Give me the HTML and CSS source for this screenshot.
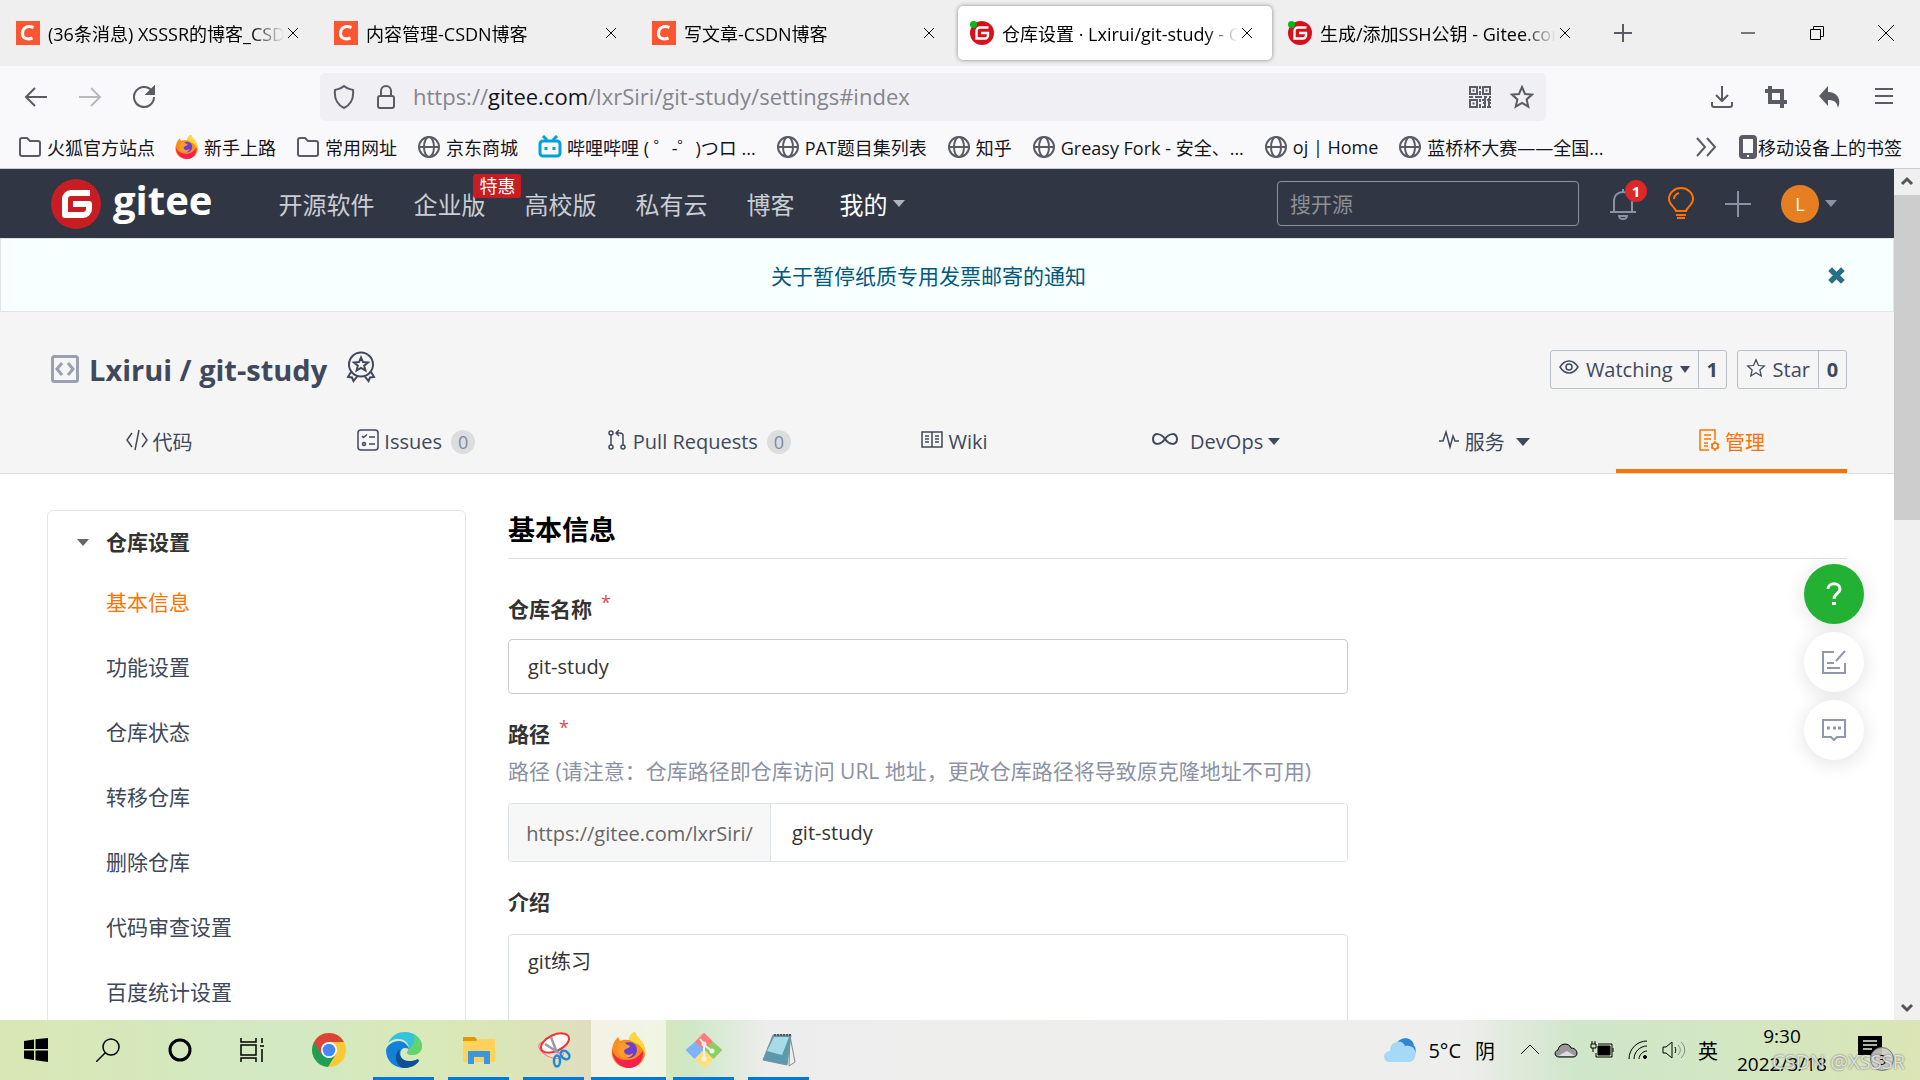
FILE: index.html
```html
<!DOCTYPE html>
<html lang="zh-CN">
<head>
<meta charset="utf-8">
<title>仓库设置 · Lxirui/git-study - Gitee.com</title>
<link rel="stylesheet" href="styles.css">
</head>
<body>
<svg class="defs" aria-hidden="true">
  <symbol id="x" viewBox="0 0 14 14"><path d="M2 2l10 10M12 2L2 12"/></symbol>
  <symbol id="folder" viewBox="0 0 24 24"><path d="M2 19V5a2 2 0 0 1 2-2h5l3 3h8a2 2 0 0 1 2 2v11a2 2 0 0 1-2 2H4a2 2 0 0 1-2-2z"/></symbol>
  <symbol id="globe" viewBox="0 0 24 24"><circle cx="12" cy="12" r="10"/><ellipse cx="12" cy="12" rx="5" ry="10"/><path d="M2 12h20"/></symbol>
  <symbol id="star" viewBox="0 0 24 24"><path d="M12 2l3 7 7 .6-5.400 4.800 1.700 7.200L12 17.800 5.700 21.600l1.700-7.200L2 9.600 9 9z"/></symbol>
  <symbol id="csdn" viewBox="0 0 24 24"><path fill="#fc5531" d="M0 0h24v24H0z"/><path d="M17.500 6.500C11 4 6.500 7 6.500 12.500c0 5 5 6.500 10 4.500" fill="none" stroke="#fff" stroke-width="3"/></symbol>
  <symbol id="gitee" viewBox="0 0 24 24"><circle cx="12" cy="12" r="12" fill="#d8101c"/><path d="M18.500 6.500H10a3.500 3.500 0 0 0-3.500 3.500v7.500h8.500a3 3 0 0 0 3-3v-2.500h-7" fill="none" stroke="#fff" stroke-width="2.400"/></symbol>
  <symbol id="firefox" viewBox="0 0 36 36">
    <path fill="#ff8b1a" d="M2 13C4 8 6 6 7 5l2 4c4-2 8-1 9-1 0-4 3-7 6-8 1 4 4 6 7 10 4 6 4 13 1 18-5 9-19 11-27 3C0 26 0 19 2 13z"/>
    <path fill="#f5204f" d="M1 17c1 6 6 11 14 11 9 0 12-3 17-9 1 9-5 17-14 17S1 28 1 17z"/>
    <path fill="#ffd83a" d="M18 8c0-4 3-7 6-8 1 4 4 6 7 10 3 5 4 9 3 12-2-6-6-10-16-14z"/>
    <circle cx="18" cy="18" r="8" fill="#6b3fd1"/>
    <path fill="#ff9a2b" d="M7 12c4-3 8-1 8 0l4 2c-1 3-5 2-6 5 0 4 6 5 9 2 0 5-12 8-15 0-1-4-1-7 0-9z"/>
  </symbol>
</svg>

<header class="browser">
  <div class="tabs">
    <div class="tab"><svg class="fav"><use href="#csdn"/></svg><span class="tab-title">(36条消息) XSSSR的博客_CSDN博客</span><button class="tab-close" aria-label="关闭"><svg><use href="#x"/></svg></button></div>
    <div class="tab"><svg class="fav"><use href="#csdn"/></svg><span class="tab-title">内容管理-CSDN博客</span><button class="tab-close" aria-label="关闭"><svg><use href="#x"/></svg></button></div>
    <div class="tab"><svg class="fav"><use href="#csdn"/></svg><span class="tab-title">写文章-CSDN博客</span><button class="tab-close" aria-label="关闭"><svg><use href="#x"/></svg></button></div>
    <div class="tab active"><span class="fav-wrap"><svg class="fav"><use href="#gitee"/></svg></span><span class="tab-title">仓库设置 · Lxirui/git-study - Gitee.com</span><button class="tab-close" aria-label="关闭"><svg><use href="#x"/></svg></button></div>
    <div class="tab"><span class="fav-wrap"><svg class="fav"><use href="#gitee"/></svg></span><span class="tab-title">生成/添加SSH公钥 - Gitee.com</span><button class="tab-close" aria-label="关闭"><svg><use href="#x"/></svg></button></div>
    <button class="new-tab" aria-label="新标签页"><svg viewBox="0 0 18 18"><path d="M9 0v18M0 9h18"/></svg></button>
    <div class="window-buttons">
      <button aria-label="最小化"><svg viewBox="0 0 16 16"><path d="M1 8h14"/></svg></button>
      <button aria-label="还原"><svg viewBox="0 0 16 16"><path d="M1.500 4.500h10v10h-10zM4.500 4V1.500h10v10H12"/></svg></button>
      <button aria-label="关闭窗口"><svg viewBox="0 0 16 16"><path d="M0 0l16 16M16 0L0 16"/></svg></button>
    </div>
  </div>

  <div class="toolbar">
    <div class="nav-buttons">
      <button aria-label="后退"><svg viewBox="0 0 24 24"><path d="M23 12H2M11 3l-9 9 9 9"/></svg></button>
      <button class="off" aria-label="前进"><svg viewBox="0 0 24 24"><path d="M1 12h21M13 3l9 9-9 9"/></svg></button>
      <button aria-label="刷新"><svg viewBox="0 0 24 24"><path d="M20 6a10 10 0 1 0 2 6"/><path fill="currentColor" d="M22 2v7h-7z"/></svg></button>
    </div>
    <div class="url-bar">
      <svg viewBox="0 0 24 24"><path d="M12 1c3 3 6 3 9 4 1 9-3 15-9 18C6 20 2 14 3 5c3-1 6-1 9-4z"/></svg>
      <svg viewBox="0 0 24 24"><rect x="4" y="11" width="16" height="12" rx="2"/><path d="M7 11V6a5 5 0 0 1 10 0v5"/></svg>
      <span class="url">https://<b>gitee.com</b>/lxrSiri/git-study/settings#index</span>
      <svg viewBox="0 0 24 24"><path d="M2 2h7v7H2zM15 2h7v7h-7zM2 15h7v7H2zM4.500 5.500h2M17.500 5.500h2M4.500 18.500h2M12 1v3M12 6v4M1 12h4M7 12h7M16 12h3M21 12h2M12 14v3M14 15h3M19 15h4M15 18h3M20 18h3M12 19v4M14 22h3M19 22h4M17 13v10M21 13v8"/></svg>
      <svg viewBox="0 0 24 24"><use href="#star"/></svg>
    </div>
    <div class="tool-buttons">
      <button aria-label="下载"><svg viewBox="0 0 24 24"><path d="M12 1v15M6 10l6 6 6-6M2 17v3a2 2 0 0 0 2 2h16a2 2 0 0 0 2-2v-3"/></svg></button>
      <button aria-label="截图"><svg viewBox="0 0 24 24"><path stroke-width="4" d="M6 1v16h17M1 6h17v17"/></svg></button>
      <button aria-label="撤销"><svg viewBox="0 0 24 24"><path fill="currentColor" stroke="none" d="M10 1v6c9 0 14 7 10 16-1-6-4-8-10-8v6L1 11z"/></svg></button>
      <button aria-label="菜单"><svg viewBox="0 0 24 24"><path d="M3 4h18M3 11h18M3 18h18"/></svg></button>
    </div>
  </div>

  <nav class="bookmarks">
    <a href="#"><svg><use href="#folder"/></svg>火狐官方站点</a>
    <a href="#"><svg class="solid"><use href="#firefox"/></svg>新手上路</a>
    <a href="#"><svg><use href="#folder"/></svg>常用网址</a>
    <a href="#"><svg><use href="#globe"/></svg>京东商城</a>
    <a href="#"><svg class="bili" viewBox="0 0 24 24"><rect x="2" y="6" width="20" height="15" rx="3"/><path d="M5 1l4 4M19 1l-4 4M8 12v3M16 12v3"/></svg>哔哩哔哩 ( ゜-゜)つロ ...</a>
    <a href="#"><svg><use href="#globe"/></svg>PAT题目集列表</a>
    <a href="#"><svg><use href="#globe"/></svg>知乎</a>
    <a href="#"><svg><use href="#globe"/></svg>Greasy Fork - 安全、...</a>
    <a href="#"><svg><use href="#globe"/></svg>oj | Home</a>
    <a href="#"><svg><use href="#globe"/></svg>蓝桥杯大赛——全国...</a>
    <span class="bookmarks-end">
      <button aria-label="更多书签"><svg viewBox="0 0 24 24"><path d="M3 3l8 9-8 9M13 3l8 9-8 9"/></svg></button>
      <a href="#"><svg class="phone" viewBox="0 0 20 24"><rect x="2" y="1" width="16" height="22" rx="3" fill="#5b5b66"/><path fill="#f9f9fb" stroke="none" d="M5 4h10v14H5z"/><path stroke="#f9f9fb" d="M9 21h2"/></svg>移动设备上的书签</a>
    </span>
  </nav>
</header>

<div class="viewport">
  <div class="page">
    <nav class="site-nav">
      <a class="logo" href="#"><svg viewBox="0 0 50 50"><circle cx="25" cy="25" r="25" fill="#c71d23"/><path d="M39 14H20a6 6 0 0 0-6 6v16h18a6 6 0 0 0 6-6v-5H22" fill="none" stroke="#fff" stroke-width="6" stroke-linejoin="round"/></svg><span>gitee</span></a>
      <a href="#">开源软件</a>
      <a class="enterprise" href="#">企业版<span class="promo">特惠</span></a>
      <a href="#">高校版</a>
      <a href="#">私有云</a>
      <a href="#">博客</a>
      <a class="mine" href="#">我的<i class="caret"></i></a>
      <div class="site-tools">
        <input type="text" class="search" placeholder="搜开源" aria-label="搜开源">
        <a class="bell" href="#" aria-label="通知"><svg viewBox="0 0 28 34"><path d="M5 24V13a9 8 0 0 1 18 0v11M1 25h26M14 5V2M10 29h8a4 3 0 0 1-8 0z"/></svg><span class="count">1</span></a>
        <a class="bulb" href="#" aria-label="动态"><svg viewBox="0 0 28 34"><path d="M9 24C8 20 2 18 2 12a12 11 0 0 1 24 0c0 6-6 8-7 12zM9 28h10M10 31h8M7 12c0-3 2-5 5-6"/></svg></a>
        <a class="plus" href="#" aria-label="新建"><svg viewBox="0 0 26 26"><path d="M13 0v26M0 13h26"/></svg></a>
        <a class="user" href="#"><span class="avatar">L</span><i class="caret"></i></a>
      </div>
    </nav>

    <div class="notice">
      <a href="#">关于暂停纸质专用发票邮寄的通知</a>
      <button aria-label="关闭通知"><svg viewBox="0 0 16 16"><path d="M2 2l12 12M14 2L2 14"/></svg></button>
    </div>

    <header class="repo">
      <div class="repo-head">
        <svg class="repo-icon" viewBox="0 0 28 28"><rect x="1.500" y="1.500" width="25" height="25" rx="2"/><path d="M11 8l-5 6 5 6M17 8l5 6-5 6"/></svg>
        <h1><a href="#">Lxirui</a> / <a href="#">git-study</a></h1>
        <svg class="medal" viewBox="0 0 28 30"><circle cx="14" cy="12.500" r="12"/><path d="M14 5.500l2 4.600 5 .4-3.800 3.200 1.200 4.800-4.400-2.600-4.400 2.600 1.200-4.800L7 10.500l5-.4zM4 20l-3 5 4 .5L6.500 29l4-5M24 20l3 5-4 .5-1.500 3.500-4-5"/></svg>
        <div class="counters">
          <div class="pair"><button><svg viewBox="0 0 20 20"><path d="M1 9c5-8 13-8 18 0-5 8-13 8-18 0z"/><circle cx="10" cy="9" r="3"/></svg>Watching<i class="caret"></i></button><a href="#">1</a></div>
          <div class="pair"><button><svg><use href="#star"/></svg>Star</button><a href="#">0</a></div>
        </div>
      </div>
      <nav class="repo-tabs">
        <a href="#"><svg viewBox="0 0 22 22"><path d="M6 4l-5 7 5 7M16 4l5 7-5 7M13 1L9 21"/></svg>代码</a>
        <a href="#"><svg viewBox="0 0 22 22"><rect x="1" y="1" width="20" height="20" rx="3"/><path d="M5 7l1.500 1.500L10 5.500M12 8h6M12 15h6"/><circle cx="7" cy="15" r="1.500"/></svg>Issues<span class="num">0</span></a>
        <a href="#"><svg viewBox="0 0 22 22"><circle cx="5" cy="4" r="2"/><circle cx="5" cy="18" r="2"/><circle cx="17" cy="18" r="2"/><path d="M5 6v10M17 16V7a3 3 0 0 0-3-3h-4M13 1l-3 3 3 3"/></svg>Pull Requests<span class="num">0</span></a>
        <a href="#"><svg viewBox="0 0 22 22"><path d="M1 3h20v15H1zM11 3v15M4 7h4M4 10h4M4 13h4M14 7h4M14 10h4M14 13h4"/></svg>Wiki</a>
        <a href="#"><svg class="wide" viewBox="0 0 28 22"><path stroke-width="2" d="M14 10C10 4 2 3 2 10s8 6 12 0 12-7 12 0-8 6-12 0z"/></svg>DevOps<i class="caret"></i></a>
        <a href="#"><svg viewBox="0 0 22 22"><path d="M1 12h4l3-9 4 15 3-11 2 5h4"/></svg>服务<i class="caret gap"></i></a>
        <a href="#" class="current"><svg viewBox="0 0 22 22"><path d="M11 21H2V1h15v10M6 6h7M6 10h7M6 14h4M6 17h4"/><circle cx="17" cy="17" r="3"/><path d="M17 12v2M17 20v2M13 15l2 1M19 18l2 1M13 19l2-1M19 16l2-1"/></svg>管理</a>
      </nav>
    </header>

    <div class="content">
      <aside class="side">
        <h2><i class="caret"></i>仓库设置</h2>
        <a class="current" href="#">基本信息</a>
        <a href="#">功能设置</a>
        <a href="#">仓库状态</a>
        <a href="#">转移仓库</a>
        <a href="#">删除仓库</a>
        <a href="#">代码审查设置</a>
        <a href="#">百度统计设置</a>
      </aside>
      <main>
        <h2>基本信息</h2>
        <form>
          <label for="name">仓库名称<sup>*</sup></label>
          <input id="name" type="text" value="git-study">
          <label for="path">路径<sup>*</sup></label>
          <p>路径 (请注意：仓库路径即仓库访问 URL 地址，更改仓库路径将导致原克隆地址不可用)</p>
          <div class="prefixed"><span>https://gitee.com/lxrSiri/</span><input id="path" type="text" value="git-study"></div>
          <label for="intro">介绍</label>
          <textarea id="intro">git练习</textarea>
        </form>
      </main>
    </div>
  </div>

  <div class="floaters">
    <button class="help" aria-label="帮助"><svg viewBox="0 0 16 24"><path d="M2 7c0-7 12-7 12 0 0 4-6 5-6 10"/><path d="M8 20v3" stroke-width="4"/></svg></button>
    <button aria-label="反馈"><svg viewBox="0 0 26 26"><path d="M13 3H2v21h22V14M24 2L15 12M6 14h7M6 19h13"/></svg></button>
    <button aria-label="留言"><svg viewBox="0 0 26 26"><path d="M2 3h22v17h-8l-3 3-3-3H2z"/><path stroke-width="3" d="M6 11h3M12 11h3M17 11h3"/></svg></button>
  </div>

  <div class="scrollbar">
    <svg viewBox="0 0 26 26"><path d="M8 15l5-5 5 5"/></svg>
    <div class="thumb"></div>
    <svg viewBox="0 0 26 26"><path d="M8 11l5 5 5-5"/></svg>
  </div>
</div>

<footer class="taskbar">
  <div class="system">
    <button aria-label="开始"><svg viewBox="0 0 24 24"><path fill="#000" d="M0 3l10-1.500V11H0zM11.500 1.300L24 0v11H11.500zM0 12.500h10V22L0 20.500zM11.500 12.500H24V24l-12.500-1.700z"/></svg></button>
    <button aria-label="搜索"><svg viewBox="0 0 24 24" fill="none" stroke="#000" stroke-width="1.500"><circle cx="15" cy="9" r="8"/><path d="M9.500 14.500L0 24"/></svg></button>
    <button aria-label="Cortana"><svg viewBox="0 0 24 24"><circle cx="12" cy="12" r="10" fill="none" stroke="#000" stroke-width="3"/></svg></button>
    <button aria-label="任务视图"><svg viewBox="0 0 24 24" fill="none" stroke="#000" stroke-width="1.500"><path d="M1 0v4h15V0M1 24v-4h15v4M1 7h15v10H1zM22 0v5M22 11v13M20 8h4"/></svg></button>
  </div>
  <div class="apps">
    <button aria-label="Chrome"><svg viewBox="0 0 36 36"><circle cx="18" cy="18" r="17" fill="#fbc934"/><path fill="#1e9f57" d="M3 10a17 17 0 0 0 14 25l8-13-7-4z"/><path fill="#dc4437" d="M3 10l7 12 8-12h15A17 17 0 0 0 3 10z"/><circle cx="18" cy="18" r="8" fill="#fff"/><circle cx="18" cy="18" r="6.300" fill="#4587f3"/></svg></button>
    <button class="open" aria-label="Edge"><svg viewBox="0 0 36 36"><path fill="#35c2e0" d="M2 11C6 3 12 0 19 0c10 0 17 7 17 14 0 6-5 9-10 9-4 0-6-2-4-4 2-4 0-13-12-12-4 1-6 2-8 4z"/><path fill="#63d46b" d="M28 3c5 3 8 7 8 11 0 6-5 9-10 9-4 0-6-2-4-4 3-6 8-6 6-16z"/><path fill="#1481d8" d="M0 18C1 13 7 9 13 9c5 0 9 4 10 8-9-4-11 6-6 11 4 5 12 5 17 0-4 6-10 8-15 8C8 36 0 29 0 18z"/><path fill="#104f95" d="M14 17c-3 8 5 16 18 10l1 2c-4 5-10 7-15 7-7-1-12-12-4-19z"/></svg></button>
    <button class="open" aria-label="资源管理器"><svg viewBox="0 0 36 36"><path fill="#e09b00" d="M2 5h12l3 4v5H2z"/><path fill="#ffd25c" d="M2 9h13l3-2h16v23H2z"/><path fill="#3a96dd" d="M7 19h22v13h-6v-7H13v7H7z"/></svg></button>
    <button class="open" aria-label="截图工具"><svg viewBox="0 0 36 36"><ellipse cx="15" cy="18" rx="13" ry="7" fill="#f7e0dc" stroke="#e77" transform="rotate(25 15 18)"/><ellipse cx="19" cy="11" rx="15" ry="8" fill="#fff" stroke="#e33" stroke-width="2" transform="rotate(-25 19 11)"/><path stroke="#99a" stroke-width="2.500" d="M15 5l6 16M9 12l14 9"/><g fill="none" stroke="#1c8ad6" stroke-width="2.500"><ellipse cx="21" cy="29" rx="3" ry="5.500"/><ellipse cx="29" cy="23" rx="3.500" ry="5" transform="rotate(-50 29 23)"/></g></svg></button>
    <button class="open front" aria-label="Firefox"><svg><use href="#firefox"/></svg></button>
    <button class="open" aria-label="Git"><svg viewBox="0 0 36 36"><g stroke-linejoin="round" stroke-width="2"><path fill="#ff7b7b" stroke="#ff7b7b" d="M18 2l8 8-8 7-8-7z"/><path fill="#80b3ff" stroke="#80b3ff" d="M9 11l8 7-8 8-8-8z"/><path fill="#8dcf62" stroke="#8dcf62" d="M27 11l8 7-8 8-8-8z"/><path fill="#ffe07a" stroke="#ffe07a" d="M18 19l8 8-8 8-8-8z"/></g><path d="M14 7l4 5v16M18 13l8 6" stroke="#f0f3ea" stroke-width="2" fill="none"/><g fill="#f0f3ea"><circle cx="18" cy="12" r="2.500"/><circle cx="26" cy="19" r="2.500"/><circle cx="18" cy="27" r="2.500"/></g></svg></button>
    <button class="open" aria-label="记事本"><svg viewBox="0 0 36 36"><path fill="#eee" stroke="#888" d="M29 4l5 26-6 4z"/><path fill="#5b9aac" stroke="#78929a" d="M12 3h18l-4 30-24-5z"/><path fill="#a8dbe8" d="M13 5h15l-7 18-15-4z"/><path stroke="#555" stroke-width="2" stroke-dasharray="2 1" d="M13 3h18"/></svg></button>
  </div>
  <div class="tray">
    <svg class="weather" viewBox="0 0 32 26"><path fill="#2f86d5" d="M12 8c3-9 17-9 18 1 2 1 2 5 1 8z"/><path fill="#a4d9f8" d="M7 25c-9 0-9-10-1-11C6 4 18 1 21 9c9-2 12 6 10 11-1 4-4 5-7 5z"/></svg>
    <span>5°C</span><span class="sky">阴</span>
    <svg class="chev" viewBox="0 0 20 20"><path d="M1 14l9-9 9 9"/></svg>
    <svg class="tray-icon" viewBox="0 0 24 20"><path fill="#999" d="M5 17c-5 0-5-6-1-7 1-7 11-8 13-2 7 0 8 9 2 9z"/><path fill="#ddd" stroke="none" d="M4 16l9-5 8 5z"/></svg>
    <svg class="tray-icon" viewBox="0 0 24 20"><path d="M8 4h14v13H6v-4M2 1v3M5 1v3M1 4h5v4H1zM3 8v4M23 8v4"/><path fill="#000" d="M8 6h12v9H8z"/></svg>
    <svg class="tray-icon" viewBox="0 0 20 20"><path d="M1 19C1 9 9 1 19 1M6 19C6 12 12 6 19 6M11 19c0-4 4-8 8-8"/><circle cx="17" cy="17" r="1.500" fill="#000"/></svg>
    <svg class="tray-icon" viewBox="0 0 24 20"><path d="M1 7h3l6-5v16l-6-5H1z"/><path d="M13 7c1 2 1 4 0 6"/><path stroke="#888" d="M16 5c3 3 3 7 0 10M19 2c5 5 5 11 0 16"/></svg>
    <span class="ime">英</span>
    <div class="clock"><time>9:30</time><time>2022/3/18</time></div>
    <div class="messages"><svg viewBox="0 0 24 24"><path d="M0 0h24v19h-6v5l-6-5H0z"/><path stroke="#e6efce" stroke-width="1.500" d="M5 5h14M5 9h14M5 13h9"/></svg><span class="badge">3</span></div>
    <span class="watermark">CSDN @XSSSR</span>
  </div>
</footer>
</body>
</html>
```
FILE: styles.css
```css
* { box-sizing: border-box; }
body {
  margin: 0;
  height: 100vh;
  display: flex;
  flex-direction: column;
  overflow: hidden;
  font-family: "Open Sans", "Noto Sans CJK SC", sans-serif;
  color: #000;
}
button { border: 0; padding: 0; background: none; font: inherit; color: inherit; display: flex; align-items: center; justify-content: center; }
a { color: inherit; text-decoration: none; }
h1, h2, p { margin: 0; }
input, textarea { font: inherit; color: inherit; outline: 0; min-width: 0; }
svg { flex: none; fill: none; stroke: currentColor; }
.defs { position: absolute; width: 0; height: 0; }
.caret { flex: none; border: 6px solid transparent; border-top: 7px solid currentColor; border-bottom: 0; }

/* browser */
.browser { flex: none; background: #f9f9fb; border-bottom: 1px solid #ccccd0; font-size: 18px; }
.tabs { height: 66px; background: #efefef; display: flex; align-items: center; padding-left: 4px; }
.tab { flex: 0 1 314px; margin-right: 4px; height: 54px; padding: 0 18px 0 12px; display: flex; align-items: center; border-radius: 5px; min-width: 0; }
.tab.active { background: #fff; box-shadow: 0 0 4px #888; }
.fav { width: 24px; height: 24px; stroke: none; display: block; }
.fav-wrap { position: relative; }
.fav-wrap::after { content: ""; position: absolute; left: 0; top: 0; width: 7px; height: 7px; border-radius: 50%; background: #0b1; }
.tab-title { flex: 1; margin-left: 8px; overflow: hidden; white-space: nowrap; -webkit-mask-image: linear-gradient(to right, #000 86%, transparent); mask-image: linear-gradient(to right, #000 86%, transparent); }
.tab-close { margin-left: 2px; }
.tab-close svg { width: 14px; height: 14px; }
.new-tab { margin-left: 20px; color: #5b5b66; }
.new-tab svg { width: 18px; height: 18px; stroke-width: 2; }
.window-buttons { margin-left: auto; display: flex; }
.window-buttons button { width: 69px; height: 54px; }
.window-buttons svg { width: 16px; height: 16px; }

.toolbar { height: 61px; display: flex; align-items: center; color: #5b5b66; padding: 0 9px; }
.toolbar svg { width: 24px; height: 24px; stroke-width: 2; }
.nav-buttons { flex: 0 0 311px; display: flex; }
.nav-buttons button { width: 54px; }
.nav-buttons .off { color: #b9b9bf; }
.url-bar { flex: 0 1 1226px; height: 48px; background: #f0f0f4; border-radius: 5px; display: flex; align-items: center; padding: 0 12px; gap: 18px; min-width: 0; }
.url { flex: 1; font-size: 22px; line-height: 46px; height: 48px; color: #85858d; margin-left: -3px; white-space: nowrap; overflow: hidden; }
.url b { font-weight: 400; color: #15141a; }
.tool-buttons { margin-left: auto; display: flex; }
.tool-buttons button { width: 54px; }

.bookmarks { height: 41px; display: flex; align-items: center; gap: 20px; padding: 0 18px 2px; white-space: nowrap; color: #15141a; }
.bookmarks a { display: flex; align-items: center; gap: 5px; }
.bookmarks svg { width: 24px; height: 24px; color: #5b5b66; stroke-width: 2; }
.bookmarks .solid { stroke: none; }
.bookmarks .bili { color: #00a1d6; stroke-width: 3; }
.bookmarks-end { margin-left: auto; display: flex; gap: 20px; }
.bookmarks-end a { gap: 0; }
.bookmarks .phone { width: 20px; }

/* page */
.viewport { flex: 1; min-height: 0; position: relative; display: flex; background: #fff; }
.page { flex: 1; min-width: 0; overflow: hidden; font-size: 21px; color: #40485b; }
.site-nav { height: 69px; background: #303643; color: #c9cdd4; display: flex; align-items: center; padding: 0 57px 0 51px; font-size: 24px; gap: 39px; white-space: nowrap; }
.logo { display: flex; align-items: center; gap: 12px; color: #fff; font-weight: 700; font-size: 40px; line-height: 50px; margin-right: 27px; }
.logo svg { width: 50px; height: 50px; stroke: none; }
.logo span { padding-bottom: 8px; }
.enterprise { position: relative; }
.promo { position: absolute; right: -36px; top: -12px; background: #c71d23; color: #fff; font-size: 18px; line-height: 24px; padding: 0 6px; border-radius: 3px; }
.mine { color: #fff; display: flex; align-items: center; gap: 6px; margin-left: 6px; }
.mine .caret { color: #b0b3ba; }
.site-tools { margin-left: auto; display: flex; align-items: center; gap: 30px; color: #8c92a4; }
.search { width: 302px; height: 45px; border: 1px solid #8c92a4; border-radius: 4px; background: none; padding: 0 12px; font-size: 21px; }
.search::placeholder { color: #8c8f96; }
.site-tools svg { display: block; width: 28px; height: 34px; stroke-width: 2; }
.bell { position: relative; }
.count { position: absolute; left: 16px; top: -7px; width: 22px; height: 22px; border-radius: 50%; background: #db2828; color: #fff; font-size: 15px; line-height: 22px; font-weight: 700; text-align: center; }
.bulb { color: #fe7300; }
.site-tools .plus svg { width: 26px; height: 26px; }
.user { display: flex; align-items: center; gap: 6px; }
.avatar { width: 38px; height: 38px; border-radius: 50%; background: #e67e22; color: #fff; font-size: 18px; line-height: 38px; text-align: center; }

.notice { height: 74px; background: #f8ffff; border: 1px solid #dfe5ec; display: flex; align-items: center; padding: 0 48px 0 28px; color: #00587e; }
.notice a { margin: 0 auto; }
.notice button { color: #276f86; }
.notice svg { width: 17px; height: 17px; stroke-width: 5; }

.repo { background: #f5f5f5; border-bottom: 1px solid #dcdddf; padding: 31px 47px 0; }
.repo-head { display: flex; align-items: center; height: 52px; padding-left: 4px; }
.repo-icon { width: 28px; height: 28px; color: #9aa0b2; stroke-width: 3; }
h1 { font-size: 29px; margin: 0 20px 0 10px; }
.medal { width: 28px; height: 30px; stroke-width: 2; margin-bottom: 4px; overflow: visible; }
.counters { margin-left: auto; display: flex; gap: 10px; }
.pair { display: flex; height: 39px; border: 1px solid #bbbfca; border-radius: 3px; font-size: 20px; }
.pair button { gap: 7px; padding: 0 8px; }
.pair svg { width: 20px; height: 20px; stroke-width: 1.5; margin-bottom: 2px; }
.pair .caret { border-width: 7px 5px 0; }
.pair a { width: 28px; border-left: 1px solid #bbbfca; font-weight: 700; line-height: 37px; text-align: center; }
.repo-tabs { display: grid; grid-template-columns: 224fr 290fr 274fr 238fr 284fr 258fr 231fr; height: 77px; margin-top: 1px; font-size: 20px; }
.repo-tabs a { display: flex; align-items: center; justify-content: center; gap: 5px; padding-top: 18px; border-bottom: 4px solid transparent; white-space: nowrap; }
.repo-tabs svg { width: 22px; height: 22px; stroke-width: 1.5; margin-bottom: 4px; }
.repo-tabs .wide { width: 28px; margin-right: 6px; }
.repo-tabs .current { color: #fe7300; border-color: #fe7300; }
.num { width: 24px; height: 24px; border-radius: 50%; background: #dcddde; color: #7f8aa3; font-size: 18px; line-height: 24px; text-align: center; margin-left: 4px; }
.caret.gap { margin: 0 6px; border-width: 8px 7px 0; }

.content { display: grid; grid-template-columns: 419px 1fr; gap: 42px; padding: 36px 47px 0; }
.side { border: 1px solid #e3e5e9; border-radius: 6px; padding: 0 0 24px 58px; }
.side h2 { position: relative; height: 59px; line-height: 63px; font-size: 21px; color: #333; }
.side h2 .caret { position: absolute; left: -29px; top: 28px; color: #666; }
.side a { display: block; line-height: 65px; }
.side .current { color: #fe7300; }
main h2 { font-size: 27px; line-height: 40px; color: #000; padding-bottom: 8px; border-bottom: 1px solid #dfe1e5; }
form { width: 840px; max-width: 100%; padding-top: 32px; }
label { display: block; font-weight: 700; line-height: 36px; color: #333; }
sup { color: #db4c4c; font-size: 18px; font-weight: 400; line-height: 0; margin-left: 9px; }
form input { width: 100%; border: 1px solid #c9c9d6; border-radius: 4px; background: #fff; color: #333; padding: 0 19px; font-size: 20px; }
#name { display: block; height: 55px; margin: 12px 0 22px; }
form p { line-height: 38px; font-size: 21px; color: #8c92a4; white-space: nowrap; }
.prefixed { display: flex; height: 59px; margin: 13px 0 22px; border: 1px solid #dde1e8; border-radius: 4px; overflow: hidden; font-size: 20px; }
.prefixed span { width: 262px; flex: none; background: #f7f7f7; color: #666; line-height: 59px; text-align: center; border-right: 1px solid #dde1e8; }
.prefixed input { border: 0; border-radius: 0; flex: 1; padding: 0 21px; }
textarea { display: block; width: 100%; height: 190px; margin-top: 14px; border: 1px solid #dde1e8; border-radius: 4px; color: #333; padding: 10px 19px; font-size: 20px; line-height: 34px; resize: none; }

.floaters { position: absolute; right: 56px; top: 395px; display: flex; flex-direction: column; gap: 8px; }
.floaters button { width: 60px; height: 60px; border-radius: 50%; background: #fff; color: #9298ab; box-shadow: 0 3px 20px rgba(0, 0, 0, .12); }
.floaters svg { width: 26px; height: 26px; stroke-width: 2; }
.floaters .help { background: #22b132; color: #fff; }
.floaters .help svg { width: 16px; height: 24px; stroke-width: 3; }

.scrollbar { flex: 0 0 26px; background: #f0f0f0; display: flex; flex-direction: column; color: #555; }
.scrollbar svg { width: 26px; height: 26px; stroke-width: 3; }
.thumb { height: 325px; background: #cdcdcd; margin-bottom: auto; }

/* taskbar */
.taskbar { flex: none; height: 60px; display: flex; align-items: stretch; font-size: 20px; background: linear-gradient(to right, #d9e7b4 0, #d2e9c4 15%, #d9e9b8 22%, #dbe5b8 27%, #e0ddc0 31%, #dce6b8 34%, #cfe8c6 36%, #ededed 40%, #eeeeec 76%, #d0e6ca 82%, #d2e7c2 90%, #dbe5b5 100%); }
.taskbar button { position: relative; }
.taskbar svg { stroke: none; }
.system { display: flex; }
.system button { width: 72px; }
.system svg { width: 24px; height: 24px; }
.system svg[stroke] { stroke: #000; }
.apps { display: flex; margin-left: 3px; }
.apps button { width: 75px; }
.apps svg { width: 36px; height: 36px; }
.apps .open::after { content: ""; position: absolute; left: 7px; right: 7px; bottom: 0; height: 3px; background: #0078d7; }
.apps .front { background: rgba(255, 255, 255, .6); }
.apps .front::after { left: 0; right: 0; }
.tray { margin-left: auto; display: flex; align-items: center; position: relative; padding-right: 32px; }
.tray svg { stroke: #000; }
.tray .weather { width: 32px; height: 26px; stroke: none; margin-right: 12px; }
.sky { margin: 0 25px 0 14px; }
.chev { width: 20px; height: 20px; margin-right: 14px; }
.tray-icon { width: 24px; height: 20px; margin-right: 12px; stroke-width: 1; }
.ime { width: 22px; }
.clock { width: 124px; line-height: 28px; display: flex; flex-direction: column; text-align: center; font-size: 19px; }
.messages { position: relative; margin: 0 6px 4px 14px; }
.messages svg { width: 24px; height: 24px; display: block; fill: #000; stroke: none; }
.badge { position: absolute; left: 12px; top: 11px; width: 24px; height: 24px; border-radius: 50%; border: 1px solid #777; background: rgba(205, 205, 200, .9); font-size: 15px; line-height: 22px; text-align: center; }
.watermark { position: absolute; right: 15px; bottom: 4px; font-size: 20px; line-height: 28px; color: rgba(255, 255, 255, .75); text-shadow: 0 0 2px #555; white-space: nowrap; }
```
